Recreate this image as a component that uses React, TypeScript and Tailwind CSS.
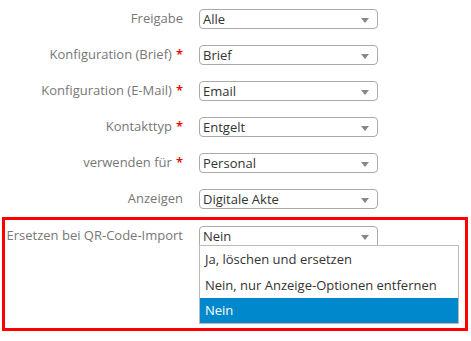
import React from "react";

const Arrow = () => (
  <svg width="8" height="5" viewBox="0 0 8 5" className="absolute right-[8px] top-[8px]">
    <path d="M0 0 L8 0 L4 5 Z" fill="#888" />
  </svg>
);

const Select = ({ value }: { value: string }) => (
  <div className="relative w-[179px] h-[20px] border border-[#aaa] rounded-[4px] bg-white pl-[3px] text-[#333] leading-[18px] text-[13px]">
    {value}
    <Arrow />
  </div>
);

const Row = ({ label, req, value }: { label: string; req?: boolean; value: string }) => (
  <div className="flex items-center h-[20px] pl-[5px]">
    <div className="w-[178px] text-right text-[#777] text-[13px] whitespace-nowrap">
      {label}
      {req && <span className="text-[#e00] ml-[4px] font-semibold">*</span>}
    </div>
    <div className="ml-[16px]">
      <Select value={value} />
    </div>
  </div>
);

export default function App() {
  return (
    <div
      className="w-[471px] h-[341px] bg-white pt-[9px] pl-[0px]"
      style={{ fontFamily: '"Open Sans", sans-serif' }}
    >
      <div className="flex flex-col gap-[16px]">
        <Row label="Freigabe" value="Alle" />
        <Row label="Konfiguration (Brief)" req value="Brief" />
        <Row label="Konfiguration (E-Mail)" req value="Email" />
        <Row label="Kontakttyp" req value="Entgelt" />
        <Row label="verwenden für" req value="Personal" />
        <Row label="Anzeigen" value="Digitale Akte" />
      </div>
      <div className="ml-[2px] mt-[8px] w-[466px] h-[114px] border-[3px] border-[#ff0000]">
        <div className="relative flex items-center h-[20px] mt-[6px]">
          <div className="w-[178px] text-right text-[#777] text-[13px] whitespace-nowrap">
            Ersetzen bei QR-Code-Import
          </div>
          <div className="ml-[16px] relative">
            <div className="relative w-[179px] h-[20px] border border-[#aaa] rounded-t-[4px] bg-white pl-[3px] text-[#333] leading-[18px] text-[13px]">
              Nein
              <Arrow />
            </div>
            <div className="absolute left-0 top-[19px] w-[260px] border border-[#bbb] bg-white text-[13px] text-[#333] z-10">
              <div className="h-[26px] leading-[26px] pl-[5px]">Ja, löschen und ersetzen</div>
              <div className="h-[26px] leading-[26px] pl-[5px]">Nein, nur Anzeige-Optionen entfernen</div>
              <div className="h-[25px] leading-[25px] pl-[5px] bg-[#0088cc] text-white">Nein</div>
            </div>
          </div>
        </div>
      </div>
    </div>
  );
}
